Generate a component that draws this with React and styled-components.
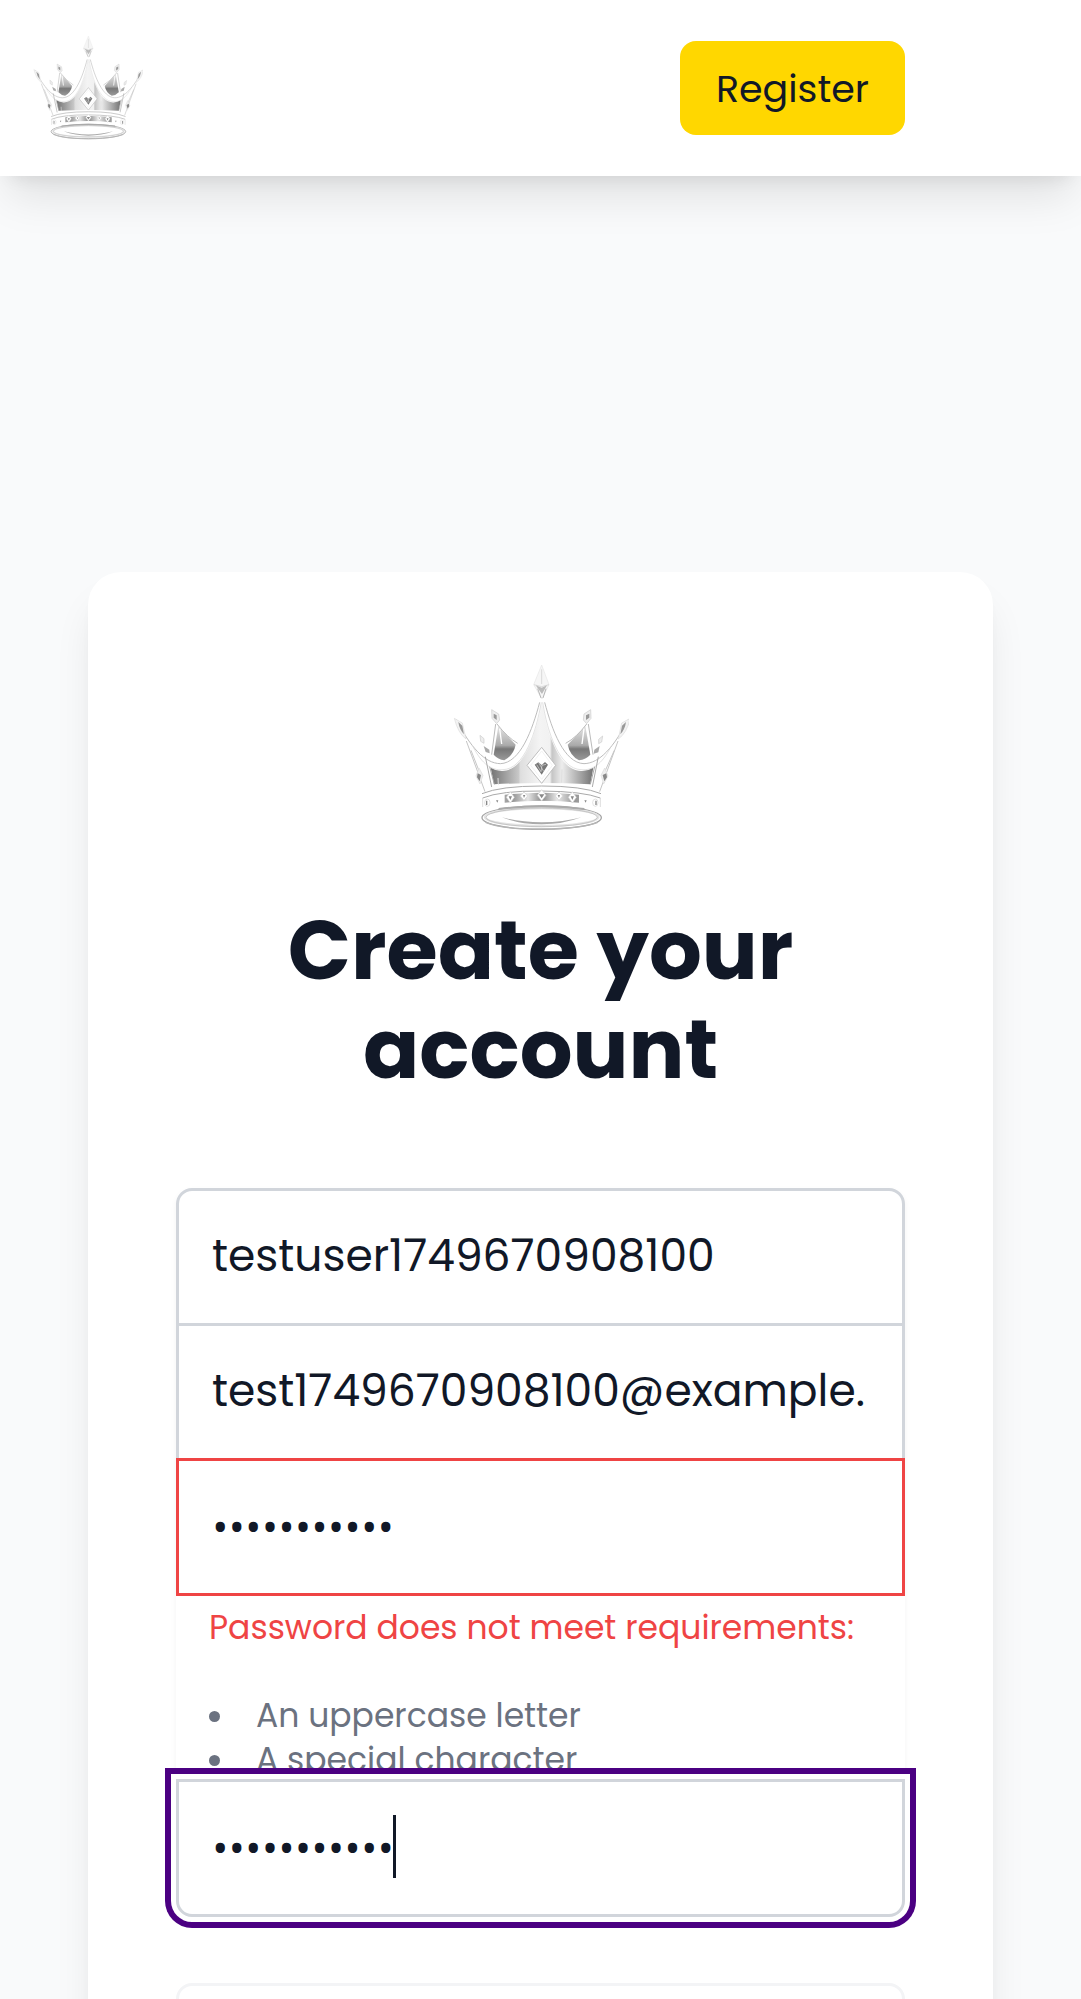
import React from "react";
import styled, { createGlobalStyle, css } from "styled-components";

const shadow = "0 28px 41px -8px rgba(0, 0, 0, 0.1), 0 11px 17px -11px rgba(0, 0, 0, 0.1)";

const GlobalStyle = createGlobalStyle`
  *, *::before, *::after { box-sizing: border-box; }
  body {
    margin: 0;
    background: #f9fafb;
    color: #111827;
    font-family: Poppins, Inter, "Open Sans", sans-serif;
  }
`;

const Page = styled.div`
  display: flex;
  flex-direction: column;
  height: 100vh;
  overflow: hidden;
`;

const Header = styled.header`
  display: flex;
  flex: none;
  align-items: center;
  justify-content: space-between;
  padding: 33px 176px 33px 33px;
  background: #fff;
  box-shadow: ${shadow};
`;

const HomeLink = styled.a`
  display: flex;
`;

const CrownSvg = styled.svg`
  display: block;
  flex: none;
  width: ${(p) => p.$size}px;
  height: ${(p) => p.$size}px;
`;

const RegisterButton = styled.button`
  padding: 20px 36px 18px;
  border: 0;
  border-radius: 16px;
  background: #ffd700;
  color: #111827;
  font: inherit;
  font-size: 38px;
  line-height: 56px;
`;

const Main = styled.main`
  display: flex;
  flex: none;
  flex-direction: column;
  padding: 396px 88px 132px;
`;

const Card = styled.section`
  display: flex;
  flex-direction: column;
  align-items: center;
  padding: 88px;
  border-radius: 33px;
  background: #fff;
  box-shadow: ${shadow};
`;

const Title = styled.h1`
  margin: 65px 0 89px;
  font-size: 83px;
  font-weight: 700;
  line-height: 99px;
  text-align: center;
`;

const Form = styled.form`
  display: flex;
  flex-direction: column;
  gap: 66px;
  width: 100%;
`;

const FieldGroup = styled.div`
  display: flex;
  flex-direction: column;
  border-radius: 16px;
  box-shadow: 0 3px 6px rgba(0, 0, 0, 0.05);
`;

const Field = styled.div`
  position: relative;
  display: flex;

  & + & {
    margin-top: -3px;
  }
`;

const TextInput = styled.input`
  width: 100%;
  height: 138px;
  padding: 0 33px 3px;
  border: 3px solid ${(p) => (p.$invalid ? "#ef4444" : "#d1d5db")};
  border-radius: ${(p) => (p.$first ? "16px 16px 0 0" : p.$last ? "0 0 16px 16px" : "0")};
  outline: 0;
  background: #fff;
  color: #111827;
  font: inherit;
  font-size: 44px;

  &[type="password"] {
    font-family: "Open Sans", sans-serif;
  }

  ${(p) =>
    p.$active &&
    css`
      box-shadow: 0 0 0 5px #fff, 0 0 0 11px #4b0082;
    `}
`;

const Caret = styled.span`
  position: absolute;
  top: 36px;
  left: 217px;
  width: 3px;
  height: 63px;
  background: #111827;
`;

const Help = styled.div`
  display: flex;
  flex-direction: column;
  height: 183px;
  padding: 10px 33px 0;
  font-size: 33px;
  line-height: 44px;
`;

const ErrorText = styled.p`
  margin: 0 0 44px;
  color: #ef4444;
  white-space: nowrap;
`;

const Rules = styled.ul`
  margin: 0;
  padding: 0;
  color: #6b7280;
  list-style: none;
`;

const Rule = styled.li`
  display: flex;
  align-items: center;
  gap: 36px;

  &::before {
    content: "";
    width: 11px;
    height: 11px;
    border-radius: 50%;
    background: #6b7280;
  }
`;

const Panel = styled.div`
  height: 220px;
  border: 3px solid #f3f4f6;
  border-radius: 16px;
`;

function Crown({ size, id }) {
  const silver = `${id}-silver`;
  const band = `${id}-band`;
  const dark = `${id}-dark`;
  return (
    <CrownSvg $size={size} viewBox="68 60 528 528" aria-hidden="true" fill="none">
      <defs>
        <linearGradient id={silver} x1="185" y1="0" x2="485" y2="0" gradientUnits="userSpaceOnUse">
          <stop offset="0" stopColor="#777" />
          <stop offset="0.27" stopColor="#c9c9c9" />
          <stop offset="0.28" stopColor="#dedede" />
          <stop offset="0.48" stopColor="#f4f4f4" />
          <stop offset="0.58" stopColor="#f1f1f1" />
          <stop offset="0.6" stopColor="#c5c5c5" />
          <stop offset="0.7" stopColor="#ededed" />
          <stop offset="1" stopColor="#777" />
        </linearGradient>
        <linearGradient id={band} x1="160" y1="0" x2="510" y2="0" gradientUnits="userSpaceOnUse">
          <stop offset="0" stopColor="#ccc" />
          <stop offset="0.25" stopColor="#959595" />
          <stop offset="0.38" stopColor="#e5e5e5" />
          <stop offset="0.5" stopColor="#888" />
          <stop offset="0.63" stopColor="#e8e8e8" />
          <stop offset="0.78" stopColor="#959595" />
          <stop offset="1" stopColor="#ccc" />
        </linearGradient>
        <linearGradient id={dark} x1="0" y1="250" x2="0" y2="360" gradientUnits="userSpaceOnUse">
          <stop offset="0" stopColor="#eee" />
          <stop offset="0.6" stopColor="#aaa" />
          <stop offset="0.7" stopColor="#777" />
          <stop offset="1" stopColor="#999" />
        </linearGradient>
      </defs>

      {/* rear points */}
      <path d="M204 258L256 314Q249 347 222 361Q203 358 190 344Z" fill={`url(#${dark})`} />
      <path d="M465 258L412 314Q419 347 446 361Q467 358 480 344Z" fill={`url(#${dark})`} />
      <path d="M200 252Q231 292 262 310M196 252L184 344M469 252Q439 292 406 310M474 252L488 344" stroke="#bbb" strokeWidth="3" />
      <path d="M208 266L214 312M461 266L455 312" stroke="#fff" strokeWidth="4" />

      {/* front body */}
      <path d="M334 182C319 282 282 390 217 393Q199 394 181 383L191 433Q334 425 480 433L489 383Q470 394 452 393C387 390 350 282 334 182Z" fill={`url(#${silver})`} />
      <path d="M203 414L204 434M270 388L272 428M395 388L394 428" stroke="#ddd" strokeWidth="3" />
      <path d="M77 238C121 328 166 380 214 379C278 375 315 270 330 182M594 238C550 328 505 380 457 379C393 375 356 270 341 182" stroke="#fff" strokeWidth="12" />
      <path d="M77 238C121 322 163 370 210 371C270 369 306 270 328 187M594 238C550 322 508 370 461 371C401 369 365 270 343 187" stroke="#bdbdbd" strokeWidth="3" />
      <path d="M128 320C156 374 184 392 218 389C282 387 317 277 333 187M542 320C514 374 486 392 452 389C388 387 351 277 337 187" stroke="#d3d3d3" strokeWidth="2" />

      {/* outer points */}
      <path d="M72 235L96 249L107 297Q83 280 72 235ZM600 235L574 249L564 297Q589 280 600 235Z" fill="#f3f3f3" stroke="#ddd" strokeWidth="2" />
      <path d="M84 246L96 257L101 283Q87 268 84 246ZM587 246L575 257L570 283Q584 268 587 246Z" fill="#999" />
      <path d="M108 303L164 455M122 331L151 405M563 303L508 455M552 331L519 405" stroke="#c6c6c6" strokeWidth="3" />
      <path d="M165 350L184 441M178 380L192 433M504 350L486 441M493 380L480 433" stroke="#aaa" strokeWidth="3" />

      {/* finials and side gems */}
      <path d="M334 75L356 134L335 177L310 134Z" fill="#f6f6f6" stroke="#e6e6e6" strokeWidth="2" />
      <path d="M334 88V132M311 134L334 140L356 134" stroke="#ccc" strokeWidth="2" />
      <path d="M316 136L334 143L350 136L335 162Z" fill="#bbb" />
      <path d="M322 146L332 174M347 146L338 174" stroke="#999" strokeWidth="2" />
      <path d="M184 209L205 222L208 240L199 251L185 235ZM481 209L461 222L459 240L469 251L482 235Z" fill="#eee" stroke="#ccc" strokeWidth="2" />
      <path d="M190 221L199 226V240L190 233ZM477 221L467 226V240L477 233Z" fill="#999" />
      <path d="M149 286L161 296V310L151 304ZM517 288L505 298V311L514 306Z" fill="#eee" stroke="#ccc" strokeWidth="2" />
      <path d="M160 318L177 329L178 340L166 336ZM508 318L492 329L490 341L504 337Z" fill="#aaa" />
      <path d="M146 384L158 406L149 432L137 408ZM523 384L512 406L520 432L533 408Z" fill="#eee" stroke="#ddd" strokeWidth="2" />
      <path d="M142 400L152 405L148 424L140 412ZM528 400L517 405L522 424L530 412Z" fill="#888" />

      {/* central gem */}
      <path d="M334 322L376 376L334 430L290 376Z" fill="#fff" stroke="#bebebe" strokeWidth="3" />
      <path d="M334 333L366 376L334 418L301 376Z" stroke="#f3f3f3" strokeWidth="3" />
      <path d="M313 374L324 367L334 375L344 366L353 374L334 404Z" fill="#777" />
      <path d="M319 374L332 395L335 376L347 373M325 368L340 394" stroke="#ddd" strokeWidth="2" />

      {/* jewelled band */}
      <path d="M155 460Q210 438 334 438T512 460V500Q450 481 334 482T157 500Z" fill="#fff" />
      <path d="M155 461Q210 438 334 438T512 461M157 474Q210 452 334 453T510 474" stroke="#aaa" strokeWidth="3" />
      <path d="M223 464Q334 452 446 464V488Q334 476 223 488Z" fill={`url(#${band})`} />
      <path d="M157 474V501M510 474V501" stroke="#ccc" strokeWidth="2" />
      <g fill="#fff" stroke="#d3d3d3" strokeWidth="2">
        <path d="M240 455L252 472L240 489L228 472ZM281 456L292 468L281 481L270 468ZM334 449L347 466L334 483L321 466ZM386 456L397 468L386 481L375 468ZM426 455L438 472L426 489L414 472Z" />
        <ellipse cx="171" cy="488" rx="8" ry="11" />
        <ellipse cx="495" cy="488" rx="8" ry="11" />
      </g>
      <path d="M235 469H245L240 480ZM278 465H285L281 474ZM326 463H342L334 475ZM382 465H389L386 474ZM421 469H431L426 480ZM167 482H171V495H167ZM495 482H499V495H495ZM197 481H204L201 488ZM462 481H469L466 488Z" fill="#888" />

      {/* base ring */}
      <ellipse cx="334" cy="533" rx="179" ry="35" fill="#fff" stroke="#a5a5a5" strokeWidth="4" />
      <ellipse cx="334" cy="531" rx="170" ry="27" stroke="#e3e3e3" strokeWidth="7" />
      <ellipse cx="334" cy="532" rx="167" ry="28" stroke="#b5b5b5" strokeWidth="2" />
      <path d="M205 507Q334 491 462 507" stroke="#aaa" strokeWidth="6" />
      <path d="M215 532Q270 553 334 553T453 532Q399 547 334 547T215 532Z" fill="#aaa" />
      <path d="M166 547Q213 568 334 567T502 547" stroke="#b5b5b5" strokeWidth="4" />
    </CrownSvg>
  );
}

export default function App() {
  return (
    <>
      <GlobalStyle />
      <Page>
        <Header>
          <HomeLink href="#" aria-label="Home">
            <Crown size={110} id="nav" />
          </HomeLink>
          <RegisterButton type="button">Register</RegisterButton>
        </Header>
        <Main>
          <Card>
            <Crown size={176} id="card" />
            <Title>Create your account</Title>
            <Form>
              <FieldGroup>
                <Field>
                  <TextInput $first type="text" aria-label="Username" defaultValue="testuser1749670908100" />
                </Field>
                <Field>
                  <TextInput type="email" aria-label="Email" defaultValue="test1749670908100@example." />
                </Field>
                <Field>
                  <TextInput $invalid type="password" aria-label="Password" defaultValue="password123" />
                </Field>
                <Help>
                  <ErrorText>Password does not meet requirements:</ErrorText>
                  <Rules>
                    <Rule>An uppercase letter</Rule>
                    <Rule>A special character</Rule>
                  </Rules>
                </Help>
                <Field>
                  <TextInput $last $active type="password" aria-label="Confirm password" defaultValue="password123" />
                  <Caret />
                </Field>
              </FieldGroup>
              <Panel />
            </Form>
          </Card>
        </Main>
      </Page>
    </>
  );
}
